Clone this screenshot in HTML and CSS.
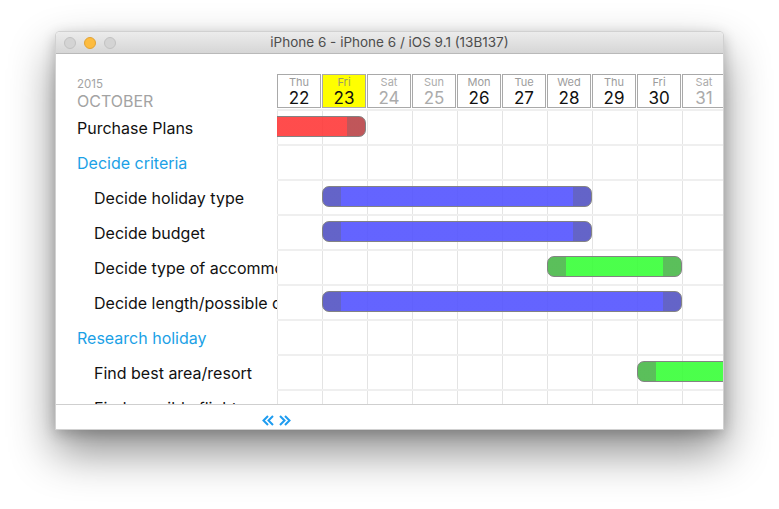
FILE: index.html
```html
<!DOCTYPE html>
<html lang="en">
<head>
<meta charset="utf-8">
<title>iPhone 6 - Gantt</title>
<link rel="stylesheet" href="styles.css">
</head>
<body>
<div class="window">
  <div class="titlebar">
    <div class="lights">
      <span class="light light-off"></span>
      <span class="light light-min"></span>
      <span class="light light-off"></span>
    </div>
    <div class="title">iPhone 6 - iPhone 6 / iOS 9.1 (13B137)</div>
  </div>
  <div class="screen">
    <div class="gantt">
      <div class="month">
        <div class="year">2015</div>
        <div class="month-name">OCTOBER</div>
      </div>
      <div class="days">
        <div class="day"><span class="dname">Thu</span><span class="dnum">22</span></div>
        <div class="day day-today"><span class="dname">Fri</span><span class="dnum">23</span></div>
        <div class="day day-weekend"><span class="dname">Sat</span><span class="dnum">24</span></div>
        <div class="day day-weekend"><span class="dname">Sun</span><span class="dnum">25</span></div>
        <div class="day"><span class="dname">Mon</span><span class="dnum">26</span></div>
        <div class="day"><span class="dname">Tue</span><span class="dnum">27</span></div>
        <div class="day"><span class="dname">Wed</span><span class="dnum">28</span></div>
        <div class="day"><span class="dname">Thu</span><span class="dnum">29</span></div>
        <div class="day"><span class="dname">Fri</span><span class="dnum">30</span></div>
        <div class="day day-weekend"><span class="dname">Sat</span><span class="dnum">31</span></div>
      </div>

      <div class="label">Purchase Plans</div>
      <div class="track"><div class="bar bar-red" style="margin-left:-90px;width:179px"></div></div>

      <div class="label label-group">Decide criteria</div>
      <div class="track"></div>

      <div class="label label-child">Decide holiday type</div>
      <div class="track"><div class="bar bar-blue" style="margin-left:45px;width:270px"></div></div>

      <div class="label label-child">Decide budget</div>
      <div class="track"><div class="bar bar-blue" style="margin-left:45px;width:270px"></div></div>

      <div class="label label-child">Decide type of accommodation</div>
      <div class="track"><div class="bar bar-green" style="margin-left:270px;width:135px"></div></div>

      <div class="label label-child">Decide length/possible dates</div>
      <div class="track"><div class="bar bar-blue" style="margin-left:45px;width:360px"></div></div>

      <div class="label label-group">Research holiday</div>
      <div class="track"></div>

      <div class="label label-child">Find best area/resort</div>
      <div class="track"><div class="bar bar-green" style="margin-left:360px;width:180px"></div></div>

      <div class="label label-child">Find possible flights</div>
      <div class="track"></div>

      <div class="label label-child">Find possible hotels</div>
      <div class="track"></div>
    </div>
    <div class="toolbar">
      <svg class="chev" viewBox="0 0 12 11" width="12" height="11"><path d="M6 1 L1.5 5.5 L6 10 M11 1 L6.5 5.5 L11 10"/></svg>
      <svg class="chev" viewBox="0 0 12 11" width="12" height="11"><path d="M1 1 L5.5 5.5 L1 10 M6 1 L10.5 5.5 L6 10"/></svg>
    </div>
  </div>
</div>
</body>
</html>
```

FILE: styles.css
```css
html, body {
  margin: 0;
  padding: 0;
  background: #ffffff;
}

html {
  height: 100%;
}

body {
  min-height: 100%;
  box-sizing: border-box;
  padding: 31px 0 0 55px;
  font-family: "Inter", "Roboto", "Liberation Sans", sans-serif;
}

.window {
  width: 667px;
  border: 1px solid rgba(0, 0, 0, 0.18);
  border-radius: 5px 5px 0 0;
  background: #fff;
  box-shadow: 0 22px 45px rgba(0, 0, 0, 0.45), 0 4px 14px rgba(0, 0, 0, 0.2);
}

.titlebar {
  height: 21px;
  border-bottom: 1px solid #b9b9b9;
  border-radius: 4px 4px 0 0;
  background: linear-gradient(to bottom, #ececec, #d6d6d6);
  display: flex;
  align-items: center;
  position: relative;
}

.lights {
  display: flex;
  gap: 8px;
  padding-left: 8px;
}

.light {
  width: 12px;
  height: 12px;
  border-radius: 50%;
  box-sizing: border-box;
}

.light-off {
  background: #d4d4d4;
  border: 1px solid #c2c2c2;
}

.light-min {
  background: #fdbc40;
  border: 1px solid #e2a334;
}

.title {
  position: absolute;
  left: 0;
  right: 0;
  text-align: center;
  font-size: 13.5px;
  color: #4d4d4d;
  line-height: 21px;
}

.screen {
  height: 375px;
  display: flex;
  flex-direction: column;
  overflow: hidden;
}

.gantt {
  height: 350px;
  overflow: hidden;
  display: grid;
  grid-template-columns: 221px 446px;
  grid-template-rows: 55px;
  grid-auto-rows: 35px;
}

.month {
  padding: 23px 0 0 21px;
  color: #a3a3a3;
}

.year {
  font-size: 11.5px;
  line-height: 14px;
}

.month-name {
  font-size: 16px;
  line-height: 20px;
}

.days {
  display: flex;
  padding-top: 20px;
  overflow: hidden;
}

.day {
  flex: none;
  width: 44px;
  height: 34px;
  margin-right: 1px;
  box-sizing: border-box;
  border: 1px solid #a9a9a9;
  padding-top: 1px;
  display: flex;
  flex-direction: column;
  align-items: center;
  background: #fff;
}

.dname {
  font-size: 11px;
  line-height: 13px;
  color: #9c9c9c;
}

.dnum {
  font-size: 17px;
  line-height: 19px;
  color: #111;
}

.day-weekend .dnum,
.day-weekend .dname {
  color: #ababab;
}

.day-today {
  background: #ffff00;
}

.day-today .dname {
  color: #9a9a66;
}

.label {
  box-sizing: border-box;
  font-size: 16px;
  line-height: 32px;
  padding-top: 3px;
  padding-left: 21px;
  color: #111;
  white-space: nowrap;
  overflow: hidden;
}

.label-group {
  color: #1ba1e6;
}

.label-child {
  padding-left: 38px;
}

.track {
  box-sizing: border-box;
  border-top: 2px solid #efefef;
  background-image: linear-gradient(to right, #e4e4e4 0 1px, transparent 1px);
  background-size: 45px 100%;
  overflow: hidden;
  padding-top: 5px;
}

.bar {
  box-sizing: border-box;
  height: 21px;
  border: 1px solid #838383;
  border-radius: 7px;
}

.bar-blue {
  background: linear-gradient(to right,
    rgba(83, 83, 194, 0.9) 0 18px,
    rgba(83, 83, 255, 0.9) 18px calc(100% - 18px),
    rgba(83, 83, 194, 0.9) calc(100% - 18px));
}

.bar-green {
  background: linear-gradient(to right,
    rgba(73, 184, 73, 0.9) 0 18px,
    rgba(56, 255, 56, 0.9) 18px calc(100% - 18px),
    rgba(73, 184, 73, 0.9) calc(100% - 18px));
}

.bar-red {
  background: linear-gradient(to right,
    rgba(185, 68, 72, 0.9) 0 18px,
    rgba(255, 57, 57, 0.9) 18px calc(100% - 18px),
    rgba(185, 68, 72, 0.9) calc(100% - 18px));
}

.toolbar {
  height: 25px;
  box-sizing: border-box;
  border-top: 1px solid #cfcfcf;
  display: flex;
  align-items: flex-start;
  gap: 5px;
  padding: 10px 0 0 206px;
  background: #fff;
}

.chev {
  fill: none;
  stroke: #1e9cf0;
  stroke-width: 2;
}
```
